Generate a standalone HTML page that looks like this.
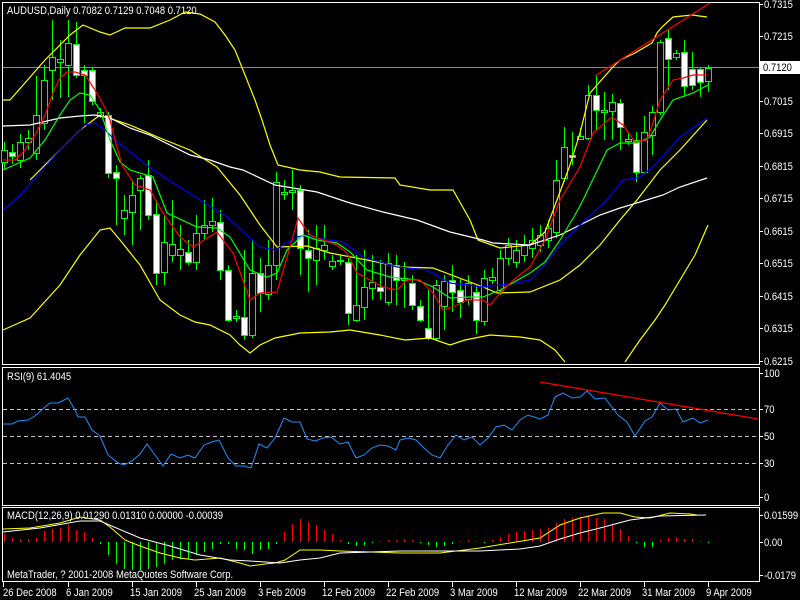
<!DOCTYPE html>
<html><head><meta charset="utf-8"><style>
html,body{margin:0;padding:0;background:#000;width:800px;height:600px;overflow:hidden}
svg{display:block}
text{font-family:"Liberation Sans","DejaVu Sans",sans-serif;font-size:11px;fill:#fff}
</style></head><body>
<svg id="s" width="800" height="600" viewBox="0 0 800 600" xmlns="http://www.w3.org/2000/svg">
<rect width="800" height="600" fill="#000"/>
<g fill="none" stroke="#fff" stroke-width="1">
<rect x="2.5" y="2.5" width="757" height="362"/>
<rect x="2.5" y="367.5" width="757" height="138"/>
<rect x="2.5" y="507.5" width="757" height="74"/>
</g>
<line x1="3" y1="67.5" x2="759" y2="67.5" stroke="#7a8c9c"/>
<g stroke="#c0c0c0" stroke-dasharray="4,3">
<line x1="3" y1="409.5" x2="759" y2="409.5"/>
<line x1="3" y1="436.5" x2="759" y2="436.5"/>
<line x1="3" y1="463.5" x2="759" y2="463.5"/>
</g>
<g id="candles"></g>
<g fill="none" stroke-width="1.2">
<polyline stroke="#ffff00" points="3,100 10,100 45,60 70,35 83,25 100,32 110,35 125,28 150,28 170,20 185,12 200,14 215,22 225,35 235,50 245,75 255,100 262,120 270,145 278,165 300,170 320,172 340,177 395,178 400,185 430,190 453,190 470,220 478,240 500,248 530,245 545,232 557,200 570,165 580,133 590,93 612,68 620,60 635,53 652,43 657,33 662,27 673,17 692,15 707,17"/>
<polyline stroke="#ffff00" points="30,180 60,150 80,130 100,115 130,125 160,138 190,150 217,167 240,195 260,225 277,247 307,246 330,253 367,260 400,267 433,268 483,287 497,293 530,292 560,280 580,265 600,245 620,220 637,200 660,170 680,150 707,120"/>
<polyline stroke="#ffff00" points="3,330 30,318 60,285 80,255 100,230 110,228 120,240 140,265 160,300 180,315 195,322 210,325 230,335 240,345 250,353 260,345 275,338 300,333 330,332 350,330 380,335 405,340 430,338 450,345 465,340 490,335 520,337 540,340 555,350 565,362"/>
<polyline stroke="#ffff00" points="625,362 640,340 655,320 665,305 680,280 695,255 708,225"/>
<polyline stroke="#ffffff" points="3,126 30,125 60,118 80,116 95,115 110,118 130,128 150,135 170,145 190,155 210,160 230,167 243,170 275,185 317,192 350,203 383,212 417,220 450,232 483,240 493,243 530,245 560,235 580,225 600,215 620,208 640,202 663,195 680,187 707,178"/>
<polyline stroke="#0000ff" points="3,210 15,200 25,190 33,180 60,150 75,135 85,125 95,123 105,130 115,140 130,152 153,170 200,200 227,217 260,247 275,250 297,237 307,235 317,238 343,242 363,257 397,267 427,270 450,283 483,287 517,283 530,280 540,270 560,245 580,225 607,200 623,180 638,178 653,167 680,137 707,118"/>
<polyline stroke="#00ff00" points="3,170 30,158 45,140 60,115 70,100 80,93 90,95 100,110 110,140 120,162 130,170 153,177 167,213 197,227 217,228 230,237 250,270 267,277 277,273 287,250 303,235 317,240 337,243 350,252 367,270 390,277 417,280 433,287 450,298 470,297 483,297 500,290 530,273 545,262 560,240 575,215 583,200 607,150 620,143 637,143 650,137 660,120 673,100 693,93 708,85"/>
<polyline stroke="#ff0000" points="3,160 15,160 25,150 35,135 45,115 55,88 60,78 67,72 75,72 85,75 95,90 105,108 110,120 115,140 122,165 135,185 150,190 163,213 180,237 193,247 217,232 233,253 250,300 260,293 277,292 290,247 298,218 310,235 323,240 337,245 347,253 357,273 383,287 397,290 407,280 420,280 433,293 443,310 453,307 467,300 483,300 490,305 503,290 517,277 530,267 545,240 560,200 580,167 593,133 612,117 623,125 635,142 647,140 653,123 660,100 673,80 683,78 693,75 707,75"/>
<line x1="595" y1="76" x2="710" y2="3" stroke="#ff0000"/>
</g>
<g id="hist"></g>
<polyline fill="none" stroke="#ffff00" points="3,529 30,528 60,523 80,517 100,520 110,527 125,540 140,546 160,553 180,558 195,560 220,558 240,563 250,566 265,564 275,563 285,560 300,550 320,550 340,551 400,553 440,553 480,548 510,543 540,538 560,525 580,518 603,513 620,513 635,517 650,518 670,513 690,514 697,515"/>
<polyline fill="none" stroke="#ffffff" points="3,532 40,528 80,521 100,521 140,538 170,546 200,555 230,560 250,561 280,563 300,560 320,558 340,553 400,551 480,551 520,549 540,546 560,539 580,533 600,528 630,520 660,516 706,515"/>
<polyline fill="none" stroke="#1e90ff" points="3,424 12,424 18,421 28,420 35,416 45,407 50,403 58,403 68,398 75,410 78,417 85,417 92,430 100,436 108,455 118,463 124,465 132,461 140,454 147,444 155,455 163,466 171,454 180,458 188,455 195,458 204,445 212,442 219,440 228,458 236,466 244,466 251,468 259,444 267,448 275,438 284,418 292,422 300,422 307,439 315,441 323,438 331,437 340,444 348,442 356,458 364,455 372,448 380,445 388,446 396,450 400,440 408,438 416,440 424,448 432,455 440,458 448,445 456,435 464,440 472,437 480,445 488,438 496,427 504,425 512,430 520,420 528,415 540,419 548,415 555,397 563,393 572,398 580,397 587,391 595,399 605,398 618,415 627,422 635,436 645,421 652,417 660,403 668,410 676,409 683,422 693,418 700,423 708,420"/>
<line x1="540" y1="382" x2="758" y2="419" stroke="#ff0000" stroke-width="1.2"/>
<text x="7" y="14">AUDUSD,Daily  0.7082 0.7129 0.7048 0.7120</text>
<text x="7" y="380">RSI(9) 61.4045</text>
<text x="7" y="519">MACD(12,26,9) 0.01290 0.01310 0.00000 -0.00039</text>
<text x="7" y="578">MetaTrader, ? 2001-2008 MetaQuotes Software Corp.</text>
<g id="axis"></g>
<rect x="760" y="61" width="40" height="13" fill="#fff"/>
<text x="763" y="71" style="fill:#000">0.7120</text>
</svg>
<script>
var NS="http://www.w3.org/2000/svg";
function el(p,t,a,txt){var e=document.createElementNS(NS,t);for(var k in a)e.setAttribute(k,a[k]);if(txt)e.textContent=txt;p.appendChild(e);return e;}
var c=[[150,162,0],[152,156,1],[142,160,0],[138,142,0],[115,153,0,76,160],[80,123,0,65,130],[57,70,0,20,100],[59,62,0,40,98],[43,65,0,20,97],[44,75,1,22,78],[70,75,1,65,123],[70,101,1,68,105],[112,116,0,108,118],[115,173,1,112,178],[172,178,1,165,225],[210,218,0,195,235],[195,212,0,180,245],[178,190,0,175,230],[175,215,1,160,220],[214,273,1,200,285],[242,272,0,215,285],[244,255,0,200,262],[249,255,0,225,270],[252,262,1,240,265],[233,262,0,215,270],[225,233,0,200,240],[221,225,0,198,232],[222,270,1,210,280],[270,320,1,265,322],[316,318,0,310,322],[317,335,1,250,340],[273,335,0,240,338],[273,293,1,258,312],[265,294,0,240,300],[182,265,0,172,280],[192,194,0,180,200],[190,192,0,170,210],[190,248,1,185,275],[250,258,1,230,292],[248,260,0,225,285],[245,250,0,225,260],[261,266,0,255,270],[260,261,0,255,265],[262,313,1,258,325],[305,320,0,255,322],[287,307,0,250,320],[282,288,0,255,300],[287,291,1,260,300],[263,302,0,253,305],[265,280,1,255,305],[278,280,0,262,308],[283,305,1,275,310],[306,320,1,300,322],[328,338,1,290,340],[285,338,0,280,340],[281,306,0,275,330],[280,292,1,265,312],[290,302,1,278,318],[283,299,0,275,305],[292,320,1,285,334],[278,321,0,270,325],[277,280,0,268,284],[258,290,0,250,295],[245,258,0,238,265],[250,262,0,240,268],[245,255,0,235,262],[240,248,0,228,258],[235,245,0,225,252],[228,240,0,220,248],[180,232,0,160,238],[147,178,0,127,182],[155,157,1,132,165],[136,139,0,128,140],[95,138,0,85,140],[95,110,1,76,131],[110,112,0,92,140],[102,111,0,94,140],[103,127,1,99,150],[139,141,0,132,145],[140,172,1,132,182],[132,172,0,116,155],[112,135,0,106,155],[42,112,0,40,115],[38,59,1,30,90],[53,57,0,50,60],[52,86,1,40,95],[69,85,1,52,90],[69,82,1,68,97],[68,81,0,65,92]];
var g=document.getElementById("candles");
c.forEach(function(b,i){var x=4+8*i;var hi=b[3]||b[0]-8,lo=b[4]||b[1]+8;
el(g,"line",{x1:x+.5,y1:hi,x2:x+.5,y2:lo,stroke:"#00ff00"});
el(g,"rect",{x:x-2.5,y:b[0]+.5,width:6,height:Math.max(1,b[1]-b[0]),fill:b[2]?"#fff":"#000",stroke:"#00ff00","stroke-width":1});});
var h=[8,4,3,3,4,11,13,14,17,12,10,4,-2,-13,-22,-27,-28,-28,-27,-25,-22,-18,-17,-17,-13,-10,-7,-2,-2,-7,-8,-12,-8,-7,-2,10,18,23,20,17,12,8,2,-2,-4,-3,-1,1,2,2,3,2,-1,-3,-5,-4,-2,1,2,1,-1,2,5,8,10,11,12,13,14,19,23,24,25,27,24,23,19,13,6,-1,-5,-5,2,4,5,3,3,1,-1];
var hg=document.getElementById("hist");
h.forEach(function(v,i){var x=4+8*i+.5;el(hg,"line",{x1:x,y1:542,x2:x,y2:542-v,stroke:v>=0?"#ff0000":"#00ff00"});});
var a=document.getElementById("axis");
[["0.7315",4],["0.7215",36],["0.7015",101],["0.6915",133],["0.6815",166],["0.6715",198],["0.6615",231],["0.6515",263],["0.6415",296],["0.6315",328],["0.6215",361],["100",373],["70",409],["50",436],["30",463],["0",497],["0.01599",515],["0.00",542],["-0.0179",575]].forEach(function(l){
el(a,"line",{x1:759,y1:l[1]+.5,x2:763,y2:l[1]+.5,stroke:"#fff"});el(a,"text",{x:764,y:l[1]+4},l[0]);});
[["26 Dec 2008",3],["6 Jan 2009",68],["15 Jan 2009",132],["25 Jan 2009",196],["3 Feb 2009",260],["12 Feb 2009",324],["22 Feb 2009",388],["3 Mar 2009",452],["12 Mar 2009",516],["22 Mar 2009",580],["31 Mar 2009",644],["9 Apr 2009",708]].forEach(function(l){
el(a,"line",{x1:l[1]+.5,y1:582,x2:l[1]+.5,y2:587,stroke:"#fff"});el(a,"text",{x:l[1]-(l[1]<10?0:2),y:596},l[0]);});
Array.prototype.forEach.call(document.querySelectorAll("text"),function(t){
var x=+t.getAttribute("x"),y=+t.getAttribute("y");t.setAttribute("x",0);t.setAttribute("y",0);
t.setAttribute("transform","translate("+x+","+y+") scale(0.86,1)");});
</script>
</body></html>
